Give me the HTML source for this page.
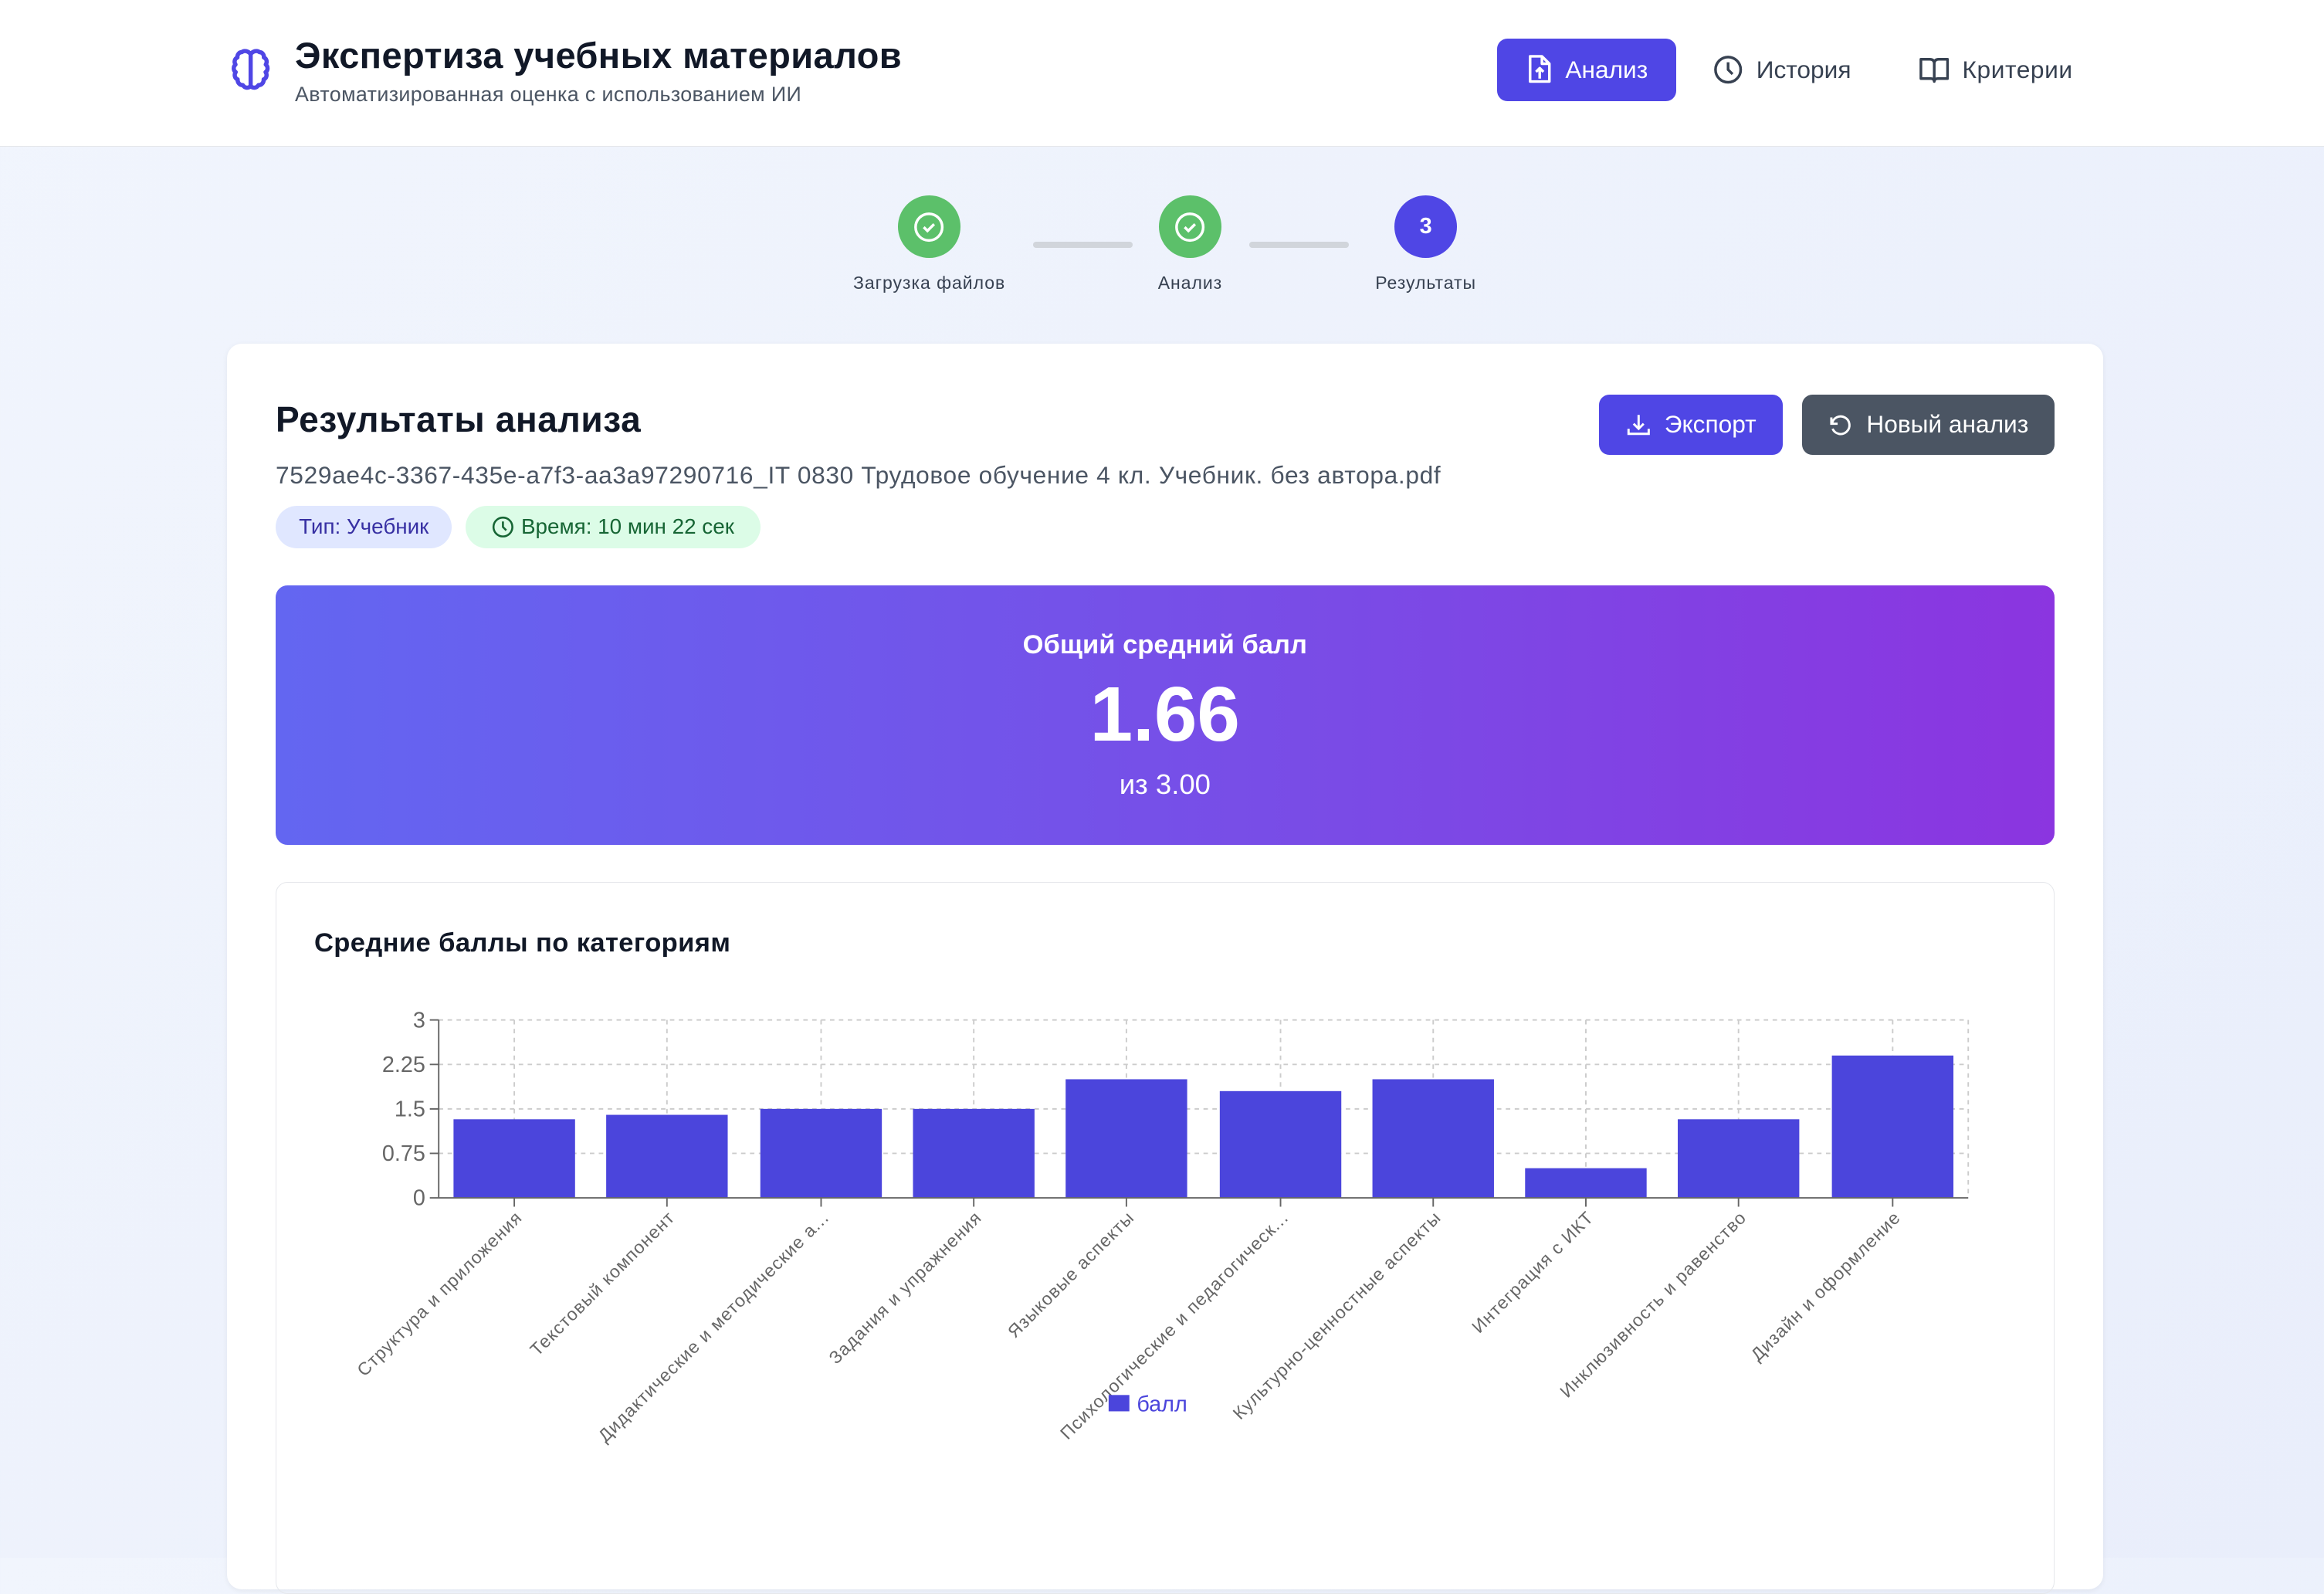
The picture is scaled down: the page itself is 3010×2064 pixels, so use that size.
<!DOCTYPE html>
<html><head><meta charset="utf-8"><style>
*{box-sizing:border-box;margin:0;padding:0}
html{zoom:1.9196}
body{width:1568px;height:1051px;overflow:hidden;font-family:"Liberation Sans",sans-serif;background:linear-gradient(135deg,#f1f5fd,#e9eefb);position:relative;color:#111827}
.hdr{position:absolute;left:0;top:0;width:1568px;height:99px;background:#fff;border-bottom:1px solid #e5e7eb}
.abs{position:absolute}
.btn{position:absolute;border-radius:7px;color:#fff;font-size:16.5px;display:flex;align-items:center;justify-content:center;gap:9px}
.circ{position:absolute;width:42px;height:42px;border-radius:50%;display:flex;align-items:center;justify-content:center;color:#fff;font-weight:bold;font-size:15px}
.lbl{position:absolute;font-size:12px;color:#374151;transform:translateX(-50%);white-space:nowrap;letter-spacing:.3px}
</style></head><body>
<div class="hdr">
<svg class="abs" style="left:152px;top:30px" width="34" height="34" viewBox="0 0 24 24" fill="none" stroke="#4f46e5" stroke-width="2" stroke-linejoin="round"><path d="M12 3v18M12 4.5C11 3 9 2.5 7.8 3.5 6.5 3.5 5.5 4.8 5.7 6 4.3 6.7 4 8.3 4.8 9.4 3.6 10.4 3.7 12.3 4.9 13 4 14.2 4.4 16 5.8 16.5 5.7 18 6.8 19.3 8.3 19.2 9.2 20.7 11 20.8 12 19.6M12 4.5C13 3 15 2.5 16.2 3.5 17.5 3.5 18.5 4.8 18.3 6 19.7 6.7 20 8.3 19.2 9.4 20.4 10.4 20.3 12.3 19.1 13 20 14.2 19.6 16 18.2 16.5 18.3 18 17.2 19.3 15.7 19.2 14.8 20.7 13 20.8 12 19.6"/></svg>
<div class="abs" style="left:199px;top:23px;font-size:24.5px;font-weight:bold;letter-spacing:.2px">Экспертиза учебных материалов</div>
<div class="abs" style="left:199px;top:56px;font-size:14px;color:#4b5563;letter-spacing:.2px">Автоматизированная оценка с использованием ИИ</div>
<div class="btn" style="left:1010px;top:26px;width:121px;height:42px;background:#4f46e5">
<svg width="18" height="20" viewBox="0 0 18 20" fill="none" stroke="#fff" stroke-width="1.8" stroke-linejoin="round"><path d="M3 1h8l5 5v12H3z M11 1v5h5 M9.5 16v-7 M7 11.5l2.5-2.5 2.5 2.5"/></svg>Анализ</div>
<div class="abs" style="left:1156px;top:37px;display:flex;align-items:center;gap:9px;font-size:16.5px;color:#374151">
<svg width="20" height="20" viewBox="0 0 20 20" fill="none" stroke="#374151" stroke-width="1.8"><circle cx="10" cy="10" r="8.5"/><path d="M10 5v5l3 3"/></svg>История</div>
<div class="abs" style="left:1295px;top:37px;display:flex;align-items:center;gap:9px;font-size:16.5px;color:#374151;letter-spacing:.3px">
<svg width="20" height="20" viewBox="0 0 20 20" fill="none" stroke="#374151" stroke-width="1.8" stroke-linejoin="round"><path d="M1 3h6c2 0 3 1 3 3v12c0-1.5-1-2-2.5-2H1zM19 3h-6c-2 0-3 1-3 3v12c0-1.5 1-2 2.5-2H19z"/></svg>Критерии</div>
</div>

<div class="circ" style="left:606px;top:132px;background:#5cc06a"><svg width="22" height="22" viewBox="0 0 22 22" fill="none" stroke="#fff" stroke-width="1.8"><circle cx="11" cy="11" r="9"/><path d="M7.5 11l2.5 2.5 4.5-4.5"/></svg></div>
<div class="circ" style="left:782px;top:132px;background:#5cc06a"><svg width="22" height="22" viewBox="0 0 22 22" fill="none" stroke="#fff" stroke-width="1.8"><circle cx="11" cy="11" r="9"/><path d="M7.5 11l2.5 2.5 4.5-4.5"/></svg></div>
<div class="circ" style="left:941px;top:132px;background:#4f46e5">3</div>
<div class="abs" style="left:697px;top:163px;width:67px;height:4px;background:#d1d5db;border-radius:2px"></div>
<div class="abs" style="left:843px;top:163px;width:67px;height:4px;background:#d1d5db;border-radius:2px"></div>
<div class="lbl" style="left:627px;top:184px;letter-spacing:.5px">Загрузка файлов</div>
<div class="lbl" style="left:803px;top:184px;letter-spacing:.5px">Анализ</div>
<div class="lbl" style="left:962px;top:184px;letter-spacing:.5px">Результаты</div>

<div class="abs" style="left:153px;top:232px;width:1266px;height:840px;background:#fff;border-radius:10px;box-shadow:0 1px 4px rgba(0,0,0,.06)"></div>
<div class="abs" style="left:186px;top:269px;font-size:24px;font-weight:bold;letter-spacing:.3px">Результаты анализа</div>
<div class="abs" style="left:186px;top:311px;font-size:16.5px;color:#4b5563;letter-spacing:.35px">7529ae4c-3367-435e-a7f3-aa3a97290716_IT 0830 Трудовое обучение 4 кл. Учебник. без автора.pdf</div>
<div class="abs" style="left:186px;top:341px;height:29px;width:119px;border-radius:15px;background:#e0e7ff;color:#3730a3;font-size:14.5px;display:flex;align-items:center;justify-content:center">Тип: Учебник</div>
<div class="abs" style="left:314px;top:341px;height:29px;width:199px;border-radius:15px;background:#dcfce7;color:#166534;font-size:14.5px;display:flex;align-items:center;justify-content:center;gap:5px"><svg width="15" height="15" viewBox="0 0 20 20" fill="none" stroke="#166534" stroke-width="1.8"><circle cx="10" cy="10" r="8.5"/><path d="M10 5v5l3 3"/></svg>Время: 10 мин 22 сек</div>
<div class="btn" style="left:1079px;top:266px;width:124px;height:41px;background:#4f46e5"><svg width="17" height="17" viewBox="0 0 20 20" fill="none" stroke="#fff" stroke-width="1.8"><path d="M2 13v4h16v-4M10 2v11M6 9l4 4 4-4"/></svg>Экспорт</div>
<div class="btn" style="left:1216px;top:266px;width:170px;height:41px;background:#4b5563"><svg width="17" height="17" viewBox="0 0 20 20" fill="none" stroke="#fff" stroke-width="1.8"><path d="M3 4v5h5M3.5 9A7 7 0 1 1 4 13"/></svg>Новый анализ</div>

<div class="abs" style="left:186px;top:395px;width:1200px;height:175px;border-radius:8px;background:linear-gradient(90deg,#6366f1,#7a4be6 60%,#8b35e0);color:#fff;text-align:center">
<div style="margin-top:30px;font-size:18px;font-weight:bold">Общий средний балл</div>
<div style="margin-top:8px;font-size:52px;font-weight:bold;line-height:58px">1.66</div>
<div style="margin-top:7px;font-size:19px">из 3.00</div>
</div>

<div class="abs" style="left:186px;top:595px;width:1200px;height:480px;border:1px solid #e5e7eb;border-radius:8px"></div>
<div class="abs" style="left:212px;top:626px;font-size:18px;font-weight:bold;letter-spacing:.2px">Средние баллы по категориям</div>
<svg class="abs" style="left:0;top:0" width="1568" height="1051" font-family="Liberation Sans, sans-serif">
<g stroke="#ccc" stroke-dasharray="3 3" fill="none">
<path d="M296 688H1328M296 718H1328M296 748H1328M296 778H1328M1328 688V808"/>
<path d="M347 688v120M450 688v120M554 688v120M657 688v120M760 688v120M864 688v120M967 688v120M1070 688v120M1173 688v120M1277 688v120"/>
</g>
<g fill="#4b45dc">
<rect x="306" y="755" width="82" height="53"/><rect x="409" y="752" width="82" height="56"/><rect x="513" y="748" width="82" height="60"/><rect x="616" y="748" width="82" height="60"/><rect x="719" y="728" width="82" height="80"/><rect x="823" y="736" width="82" height="72"/><rect x="926" y="728" width="82" height="80"/><rect x="1029" y="788" width="82" height="20"/><rect x="1132" y="755" width="82" height="53"/><rect x="1236" y="712" width="82" height="96"/>
</g>
<path d="M296 688V808H1328M290 688h6M290 718h6M290 748h6M290 778h6M290 808h6M347 808v6M450 808v6M554 808v6M657 808v6M760 808v6M864 808v6M967 808v6M1070 808v6M1173 808v6M1277 808v6" stroke="#666" fill="none"/>
<g font-size="15" fill="#666" text-anchor="end"><text x="287" y="693">3</text><text x="287" y="723">2.25</text><text x="287" y="753">1.5</text><text x="287" y="783">0.75</text><text x="287" y="813">0</text></g>
<g font-size="12" fill="#666" text-anchor="end" letter-spacing=".6">
<text transform="translate(353,822) rotate(-45)">Структура и приложения</text>
<text transform="translate(456,822) rotate(-45)">Текстовый компонент</text>
<text transform="translate(560,822) rotate(-45)">Дидактические и методические а...</text>
<text transform="translate(663,822) rotate(-45)">Задания и упражнения</text>
<text transform="translate(766,822) rotate(-45)">Языковые аспекты</text>
<text transform="translate(870,822) rotate(-45)">Психологические и педагогическ...</text>
<text transform="translate(973,822) rotate(-45)">Культурно-ценностные аспекты</text>
<text transform="translate(1076,822) rotate(-45)">Интеграция с ИКТ</text>
<text transform="translate(1179,822) rotate(-45)">Инклюзивность и равенство</text>
<text transform="translate(1283,822) rotate(-45)">Дизайн и оформление</text>
</g>
<rect x="748" y="941" width="14" height="11" fill="#4b45dc"/>
<text x="767" y="952" font-size="15" fill="#4b45dc">балл</text>
</svg>
</body></html>
